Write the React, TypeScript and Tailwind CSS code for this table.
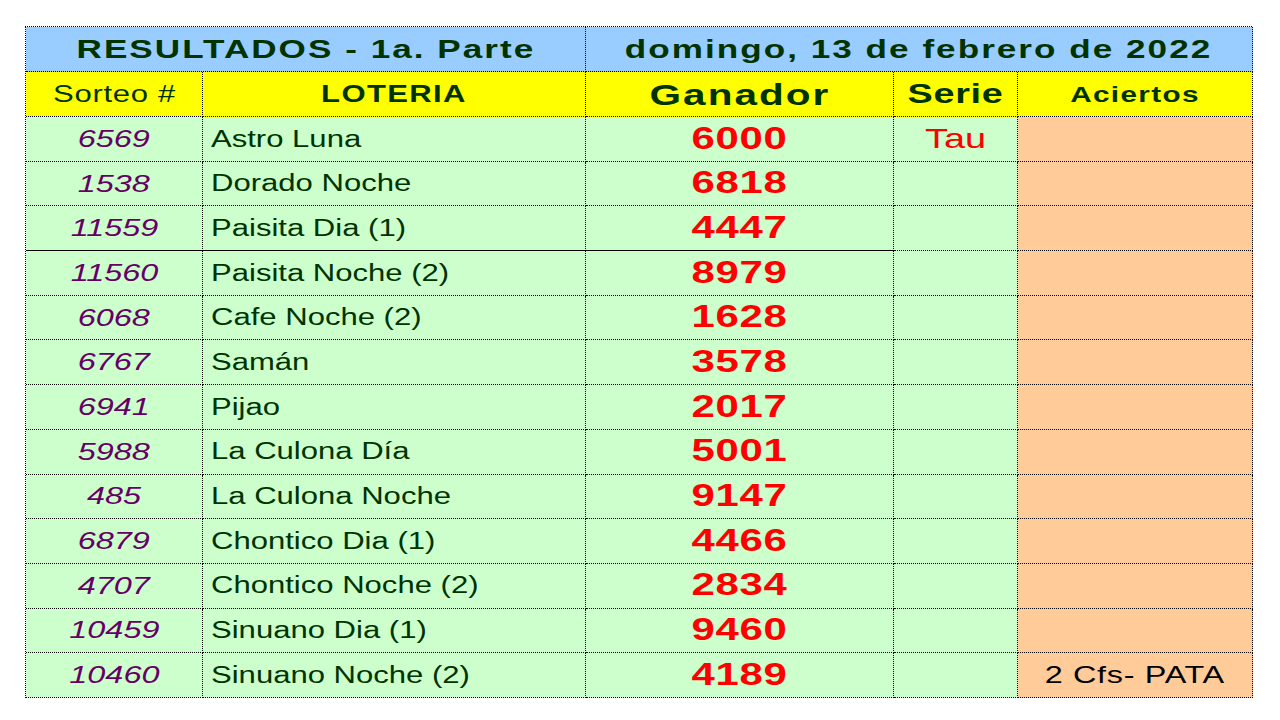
const rows = [
  { id: "6569", name: "Astro Luna", num: "6000", serie: "Tau", hits: "" },
  { id: "1538", name: "Dorado Noche", num: "6818", serie: "", hits: "" },
  { id: "11559", name: "Paisita Dia (1)", num: "4447", serie: "", hits: "" },
  { id: "11560", name: "Paisita Noche (2)", num: "8979", serie: "", hits: "" },
  { id: "6068", name: "Cafe Noche (2)", num: "1628", serie: "", hits: "" },
  { id: "6767", name: "Samán", num: "3578", serie: "", hits: "" },
  { id: "6941", name: "Pijao", num: "2017", serie: "", hits: "" },
  { id: "5988", name: "La Culona Día", num: "5001", serie: "", hits: "" },
  { id: "485", name: "La Culona Noche", num: "9147", serie: "", hits: "" },
  { id: "6879", name: "Chontico Dia (1)", num: "4466", serie: "", hits: "" },
  { id: "4707", name: "Chontico Noche (2)", num: "2834", serie: "", hits: "" },
  { id: "10459", name: "Sinuano Dia (1)", num: "9460", serie: "", hits: "" },
  { id: "10460", name: "Sinuano Noche (2)", num: "4189", serie: "", hits: "2 Cfs- PATA" },
];

const cell = "border-r border-b border-dotted border-black flex items-center";
// the sheet text is drawn wide, so every label is stretched a bit
const wide = "inline-block scale-x-[1.35] whitespace-nowrap";

export default function App() {
  return (
    <div className="w-[1280px] h-[720px] bg-white pt-[26px] pl-[25px] font-['Liberation_Sans',Arial,sans-serif]">
      <div className="w-[1227px] border-t border-l border-dotted border-black grid grid-cols-[177px_383px_308px_124px_235px]">
        {/* title row */}
        <div className={`${cell} col-span-2 h-[45px] bg-[#99ccff] justify-center text-[26px] font-bold tracking-[1.5px] text-[#003300]`}>
          <span className={wide}>RESULTADOS - 1a. Parte</span>
        </div>
        <div className={`${cell} col-span-3 h-[45px] bg-[#99ccff] justify-center text-[26px] font-bold tracking-[1.5px] text-[#003300]`}>
          <span className={wide}>domingo, 13 de febrero de 2022</span>
        </div>

        {/* header row */}
        <div className={`${cell} h-[45px] bg-[#ffff00] justify-center text-[23px] tracking-[0.5px] text-[#003300]`}>
          <span className={wide}>Sorteo #</span>
        </div>
        <div className={`${cell} h-[45px] bg-[#ffff00] justify-center text-[23px] font-bold tracking-[1px] text-[#003300]`}>
          <span className={wide}>LOTERIA</span>
        </div>
        <div className={`${cell} h-[45px] bg-[#ffff00] justify-center text-[30px] font-bold tracking-[1.5px] text-[#003300]`}>
          <span className={wide}>Ganador</span>
        </div>
        <div className={`${cell} h-[45px] bg-[#ffff00] justify-center text-[28px] font-bold tracking-[0.5px] text-[#003300]`}>
          <span className={wide}>Serie</span>
        </div>
        <div className={`${cell} h-[45px] bg-[#ffff00] justify-center text-[22px] font-bold tracking-[1px] text-[#003300]`}>
          <span className={wide}>Aciertos</span>
        </div>

        {rows.map((r, i) => {
          const solid = i === 2 ? "[border-bottom-style:solid]" : "";
          return (
            <div key={r.id} className="contents">
              <div className={`${cell} ${solid} h-[44.7px] bg-[#ccffcc] justify-center italic text-[24px] text-[#660066]`}>
                <span className={wide}>{r.id}</span>
              </div>
              <div className={`${cell} ${solid} h-[44.7px] bg-[#ccffcc] pl-[8px] text-[23px] text-[#003300]`}>
                <span className={`${wide} origin-left`}>{r.name}</span>
              </div>
              <div className={`${cell} ${solid} h-[44.7px] bg-[#ccffcc] justify-center text-[31px] font-bold tracking-[0.5px] text-[#ff0000]`}>
                <span className={wide}>{r.num}</span>
              </div>
              <div className={`${cell} h-[44.7px] bg-[#ccffcc] justify-center text-[28px] text-[#ff0000]`}>
                <span className={wide}>{r.serie}</span>
              </div>
              <div className={`${cell} h-[44.7px] bg-[#ffcc99] justify-center text-[24px] tracking-[0.5px] text-black`}>
                <span className={wide}>{r.hits}</span>
              </div>
            </div>
          );
        })}
      </div>
    </div>
  );
}
